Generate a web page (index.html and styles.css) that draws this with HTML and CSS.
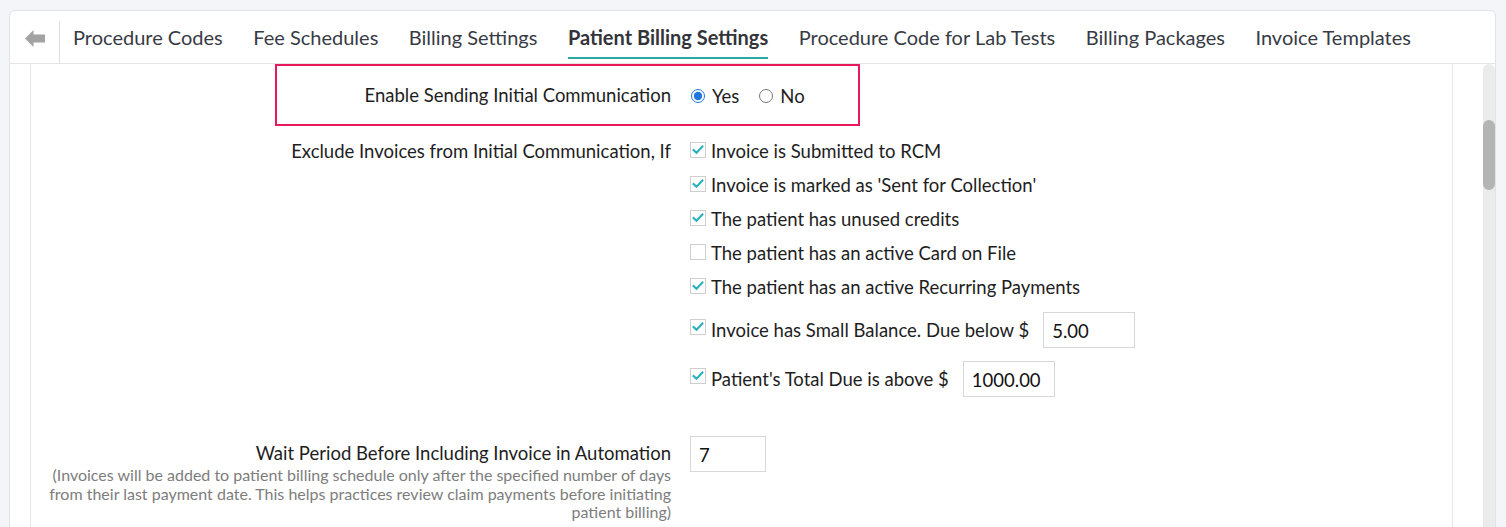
FILE: index.html
```html
<!DOCTYPE html>
<html lang="en">
<head>
<meta charset="utf-8">
<title>Patient Billing Settings</title>
<link rel="stylesheet" href="styles.css">
</head>
<body>
<div class="card">
  <header class="tabs-bar">
    <button class="back" aria-label="Back">
      <svg width="20" height="17" viewBox="0 0 20 17"><path d="M0 8.5 L8.5 0 L8.5 4.5 L20 4.5 L20 12.5 L8.5 12.5 L8.5 17 Z" fill="#a3a3a3"/></svg>
    </button>
    <nav class="tabs">
      <a class="tab">Procedure Codes</a>
      <a class="tab">Fee Schedules</a>
      <a class="tab">Billing Settings</a>
      <a class="tab active">Patient Billing Settings</a>
      <a class="tab">Procedure Code for Lab Tests</a>
      <a class="tab">Billing Packages</a>
      <a class="tab">Invoice Templates</a>
    </nav>
  </header>
  <div class="card-body">
    <section class="panel">
      <div class="highlight-row">
        <div class="row-label">Enable Sending Initial Communication</div>
        <div class="radios">
          <label class="radio"><input type="radio" name="init" checked> Yes</label>
          <label class="radio"><input type="radio" name="init"> No</label>
        </div>
      </div>

      <div class="form-row exclude-row">
        <div class="row-label single">Exclude Invoices from Initial Communication, If</div>
        <div class="checks">
          <label class="check"><span class="box on"><svg viewBox="0 0 16 16"><path d="M3 7.5 L6.3 10.5 L13 3.5"/></svg></span>Invoice is Submitted to RCM</label>
          <label class="check"><span class="box on"><svg viewBox="0 0 16 16"><path d="M3 7.5 L6.3 10.5 L13 3.5"/></svg></span>Invoice is marked as 'Sent for Collection'</label>
          <label class="check"><span class="box on"><svg viewBox="0 0 16 16"><path d="M3 7.5 L6.3 10.5 L13 3.5"/></svg></span>The patient has unused credits</label>
          <label class="check"><span class="box"></span>The patient has an active Card on File</label>
          <label class="check"><span class="box on"><svg viewBox="0 0 16 16"><path d="M3 7.5 L6.3 10.5 L13 3.5"/></svg></span>The patient has an active Recurring Payments</label>
          <label class="check with-input first-input"><span class="box on"><svg viewBox="0 0 16 16"><path d="M3 7.5 L6.3 10.5 L13 3.5"/></svg></span>Invoice has Small Balance. Due below $<input class="text-input w92" type="text" value="5.00"></label>
          <label class="check with-input second-input"><span class="box on"><svg viewBox="0 0 16 16"><path d="M3 7.5 L6.3 10.5 L13 3.5"/></svg></span>Patient's Total Due is above $<input class="text-input w92" type="text" value="1000.00"></label>
        </div>
      </div>

      <div class="form-row wait-row">
        <div class="row-label multi">
          <div class="title">Wait Period Before Including Invoice in Automation</div>
          <div class="hint">(Invoices will be added to patient billing schedule only after the specified number of days from their last payment date. This helps practices review claim payments before initiating patient billing)</div>
        </div>
        <div><input class="text-input w76" type="text" value="7"></div>
      </div>
    </section>
    <div class="scrollbar"><div class="thumb"></div></div>
  </div>
</div>
</body>
</html>
```

FILE: styles.css
```css
* { box-sizing: border-box; }
html, body { margin: 0; padding: 0; }
body {
  background: #f4f5f9;
  font-family: Lato, "Noto Sans", sans-serif;
  color: #1e1e1e;
  height: 527px;
  overflow: hidden;
}
.card {
  margin: 10px 0 0 9px;
  width: 1487px;
  height: 620px;
  background: #fff;
  border: 1px solid #e1e3e8;
  border-radius: 6px;
  display: flex;
  flex-direction: column;
}
.tabs-bar {
  height: 53px;
  flex: none;
  border-bottom: 1px solid #e4e4e4;
  display: flex;
  align-items: stretch;
}
.back {
  width: 50px;
  border: none;
  background: none;
  padding: 0 0 0 15px;
  display: flex;
  align-items: center;
  border-right: 1px solid #dedede;
  margin: 10px 0 0 0;
  padding-bottom: 8px;
  cursor: pointer;
}
.tabs {
  display: flex;
  gap: 30.5px;
  padding-left: 13px;
}
.tab {
  font-size: 20px;
  color: #383b45;
  display: flex;
  align-items: center;
  padding-top: 5px;
  border-bottom: 2px solid transparent;
  margin-bottom: 4px;
  cursor: pointer;
}
.tab.active {
  font-weight: 700;
  color: #33343a;
  border-bottom-color: #2aa8a6;
}
.card-body {
  flex: 1;
  display: flex;
  padding-left: 20px;
}
.panel {
  width: 1423px;
  border-left: 1px solid #e6e6e6;
  border-right: 1px solid #e6e6e6;
  font-size: 18.5px;
}
.scrollbar {
  margin-left: auto;
  width: 12px;
  background: #ebebeb;
  border-radius: 6px 6px 0 0;
  padding-top: 56px;
}
.thumb {
  height: 70px;
  background: #b4b4b4;
  border-radius: 6px;
}
.highlight-row {
  margin-left: 244px;
  width: 585px;
  height: 62px;
  border: 2px solid #e8195b;
  display: grid;
  grid-template-columns: 394px 1fr;
  column-gap: 19px;
  align-items: center;
}
.row-label { text-align: right; }
.radios { display: flex; align-items: center; gap: 19px; padding-top: 2px; }
.radio { display: flex; align-items: center; gap: 7px; }
.radio input {
  margin: 0 0 0 1px;
  width: 14px;
  height: 14px;
  accent-color: #1f78e0;
}
.form-row {
  display: grid;
  grid-template-columns: 640px 1fr;
  column-gap: 19px;
  align-items: start;
}
.exclude-row { margin-top: 8px; }
.row-label.single { line-height: 34px; }
.checks { display: flex; flex-direction: column; }
.check {
  height: 34px;
  display: flex;
  align-items: center;
  gap: 5px;
}
.box {
  width: 16px;
  height: 16px;
  border: 1px solid #cfcfcf;
  background: #fff;
  flex: none;
  display: flex;
  margin-top: -3px;
}
.box svg { width: 15px; height: 15px; }
.box path { fill: none; stroke: #2ab2bf; stroke-width: 2.4; stroke-linecap: square; }
.check.with-input { height: 36px; }
.first-input { margin-top: 8px; }
.second-input { margin-top: 13px; }
.with-input .box { margin-top: -6px; }
.with-input { align-items: center; }
.text-input {
  height: 36px;
  border: 1px solid #d7d7d7;
  font-family: Lato, "Noto Sans", sans-serif;
  font-size: 18.5px;
  color: #111;
  padding: 2px 8px 0;
  margin-left: 9px;
  outline: none;
}
.w92 { width: 92px; }
.w76 { width: 76px; margin-left: 0; }
.wait-row { margin-top: 39px; }
.row-label.multi { padding-top: 7px; }
.title { line-height: 20px; }
.hint {
  margin-top: 3px;
  font-size: 16px;
  line-height: 18.5px;
  color: #7d7d7d;
}
```
